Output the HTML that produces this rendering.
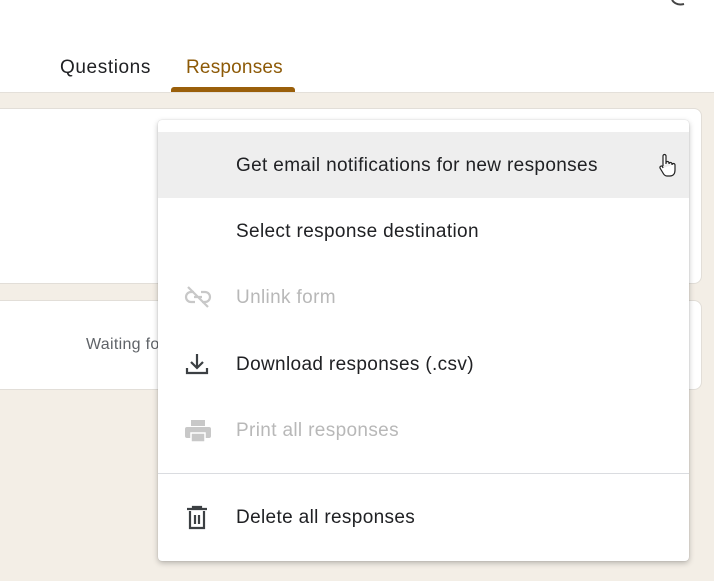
<!DOCTYPE html>
<html><head><style>
body{margin:0;width:714px;height:581px;overflow:hidden;position:relative;font-family:"Liberation Sans",Arial,sans-serif;background:#f3eee6}
.top{position:absolute;left:0;top:0;width:714px;height:92px;background:#fff;border-bottom:1px solid #e4e0da}
.tab{position:absolute;top:57px;font-size:19px;letter-spacing:0.2px}
.card{position:absolute;background:#fff;border-radius:8px;border:1px solid #e2ded8}
.menu{position:absolute;left:158px;top:120px;width:531px;height:441px;background:#fff;border-radius:4px;box-shadow:0 2px 6px rgba(0,0,0,.25),0 0 1px rgba(0,0,0,.2)}
.row{position:absolute;left:0;width:531px;height:66px;font-size:19px;letter-spacing:0.35px;color:#202124}
.row span{position:absolute;left:78px;top:23px}
.row svg{position:absolute;left:26px;top:21px}
.dis{color:#b8b8b8}
</style></head><body>
<div class="top"></div>
<div class="tab" style="left:60px;color:#202124;letter-spacing:0.6px">Questions</div>
<div class="tab" style="left:186px;color:#8d5a07">Responses</div>
<div style="position:absolute;left:171px;top:87px;width:124px;height:5px;background:#9a5f0a;border-radius:3px 3px 0 0"></div>
<svg style="position:absolute;left:670px;top:0" width="20" height="8"><path d="M2 0 Q6 6 14 4" stroke="#444" stroke-width="2" fill="none"/></svg>
<div class="card" style="left:-10px;top:108px;width:710px;height:174px"></div>
<div class="card" style="left:-10px;top:300px;width:710px;height:88px"></div>
<div style="position:absolute;left:86px;top:336px;font-size:16px;color:#5f6368;letter-spacing:0.3px">Waiting fo</div>
<div class="menu">
<div class="row" style="top:12px;background:#eeeeee"><span>Get email notifications for new responses</span>
<svg style="left:498px;top:20px" width="22" height="26" viewBox="0 0 22 26"><path d="M7 14V4a1.5 1.5 0 013 0v8 M10 11a1.5 1.5 0 013 0v1 M13 12a1.5 1.5 0 013 0v1 M16 13a1.5 1.5 0 013 0v5c0 4-2 6-5 6h-3c-2 0-3-1-4-3l-3-5a1.5 1.5 0 012.5-1.5L7 16" fill="#fff" stroke="#222" stroke-width="1.2"/></svg></div>
<div class="row" style="top:78px"><span>Select response destination</span></div>
<div class="row dis" style="top:144px"><span class="dis">Unlink form</span>
<svg width="28" height="24" viewBox="0 0 28 24"><path d="M10 7H7a5 5 0 000 10h4 M17 7h4a5 5 0 010 10h-3 M10 12h8 M4 2l20 20" stroke="#c8c8c8" stroke-width="2.2" fill="none"/></svg></div>
<div class="row" style="top:211px"><span>Download responses (.csv)</span>
<svg width="26" height="24" viewBox="0 0 26 24"><path d="M13 2v13 M7 10l6 6 6-6 M3 16v5h20v-5" stroke="#3c4043" stroke-width="2.2" fill="none"/></svg></div>
<div class="row dis" style="top:277px"><span class="dis">Print all responses</span>
<svg width="28" height="26" viewBox="0 0 28 26"><rect x="7" y="2" width="14" height="6" fill="#c8c8c8"/><rect x="1" y="9" width="26" height="11" rx="2" fill="#c8c8c8"/><rect x="7" y="15" width="14" height="9" fill="#c8c8c8" stroke="#fff" stroke-width="1.5"/></svg></div>
<div style="position:absolute;left:0;top:353px;width:531px;height:1px;background:#dadce0"></div>
<div class="row" style="top:364px"><span>Delete all responses</span>
<svg width="26" height="26" viewBox="0 0 26 26"><path d="M3 4h20 M9 4V2h8v2 M6 6v17h14V6 M11 10v9 M15 10v9" stroke="#3c4043" stroke-width="2.2" fill="none"/></svg></div>
</div>
</body></html>
